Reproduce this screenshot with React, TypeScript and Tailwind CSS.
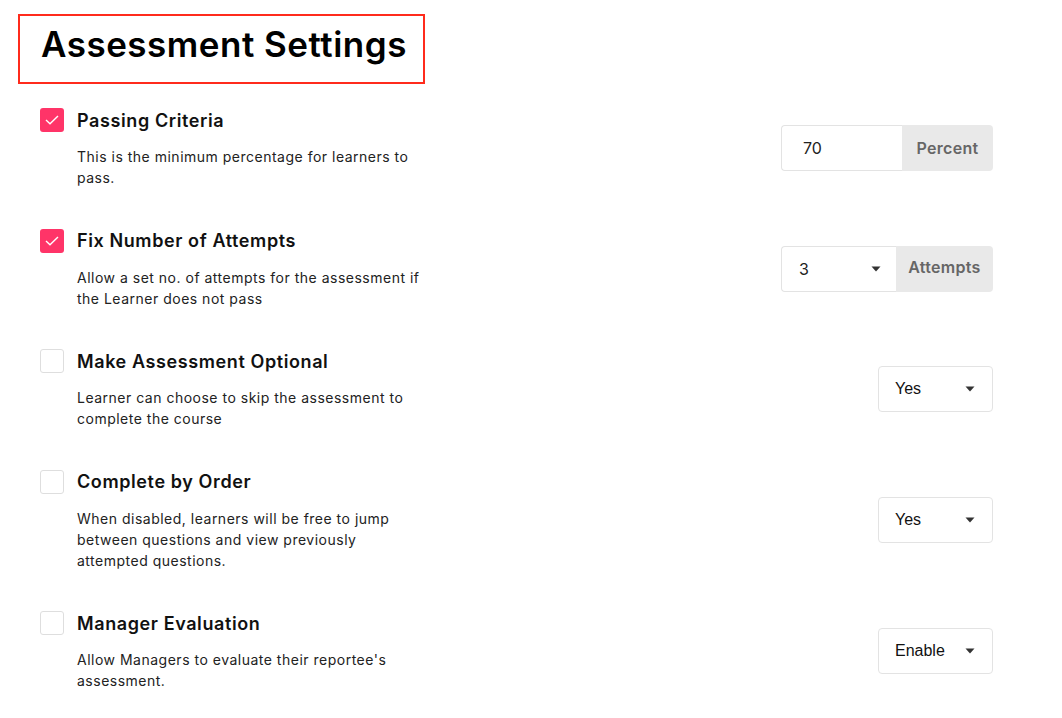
import React from "react";

type Control =
    | { kind: "addon"; value: string; addon: string; inputW: string; addonW: string; select?: boolean }
    | { kind: "select"; value: string };

type Setting = {
    title: string;
    lines: string[];
    checked: boolean;
    control: Control;
};

const settings: Setting[] = [
    {
        title: "Passing Criteria",
        lines: ["This is the minimum percentage for learners to", "pass."],
        checked: true,
        control: { kind: "addon", value: "70", addon: "Percent", inputW: "w-[121px]", addonW: "w-[91px]" },
    },
    {
        title: "Fix Number of Attempts",
        lines: ["Allow a set no. of attempts for the assessment if", "the Learner does not pass"],
        checked: true,
        control: { kind: "addon", value: "3", addon: "Attempts", inputW: "w-[115px]", addonW: "w-[97px]", select: true },
    },
    {
        title: "Make Assessment Optional",
        lines: ["Learner can choose to skip the assessment to", "complete the course"],
        checked: false,
        control: { kind: "select", value: "Yes" },
    },
    {
        title: "Complete by Order",
        lines: ["When disabled, learners will be free to jump", "between questions and view previously", "attempted questions."],
        checked: false,
        control: { kind: "select", value: "Yes" },
    },
    {
        title: "Manager Evaluation",
        lines: ["Allow Managers to evaluate their reportee's", "assessment."],
        checked: false,
        control: { kind: "select", value: "Enable" },
    },
];

function Caret() {
    return (
        <svg width="10" height="6" viewBox="0 0 10 6" className="shrink-0">
            <path d="M0.5 0.5 H9.5 L5 5.5 Z" fill="#333" />
        </svg>
    );
}

function Checkbox({ checked }: { checked: boolean }) {
    if (checked) {
        return (
            <div className="flex h-6 w-6 shrink-0 items-center justify-center rounded-[3px] bg-[#ff3468]">
                <svg width="14" height="10" viewBox="0 0 14 10">
                    <path d="M1 5 L5 8.8 L13 1" fill="none" stroke="white" strokeWidth="1.4" />
                </svg>
            </div>
        );
    }
    return <div className="h-6 w-6 shrink-0 rounded-[3px] border border-[#dedede] bg-white"></div>;
}

function SettingControl({ control }: { control: Control }) {
    if (control.kind === "addon") {
        return (
            <div className="flex h-[46px] w-[212px]">
                <div
                    className={`${control.inputW} flex items-center justify-between rounded-l-[4px] border border-r-0 border-[#e3e3e3] bg-white text-base text-[#222] ${
                        control.select ? "pl-[17px] pr-[15px]" : "pl-[21px]"
                    }`}
                >
                    <span>{control.value}</span>
                    {control.select && <Caret />}
                </div>
                <div
                    className={`${control.addonW} flex items-center justify-center rounded-r-[4px] bg-[#e9e9e9] text-base font-semibold tracking-[0.3px] text-[#666] ${
                        control.select ? "pb-1" : ""
                    }`}
                >
                    {control.addon}
                </div>
            </div>
        );
    }
    return (
        <div className="flex h-[46px] w-[115px] items-center justify-between rounded-[4px] border border-[#e3e3e3] bg-white pl-4 pr-[17px] font-['Liberation_Sans',Arial,sans-serif] text-base text-[#111]">
            <span>{control.value}</span>
            <Caret />
        </div>
    );
}

export default function App() {
    return (
        <div className="min-h-screen bg-white font-['Inter',sans-serif] text-[#111]">
            <div className="pl-[18px] pt-[14px]">
                <div className="flex h-[70px] w-[407px] items-center border-2 border-[#ff2b1c] pb-[9px] pl-[21px]">
                    <h1 className="text-[35px] font-semibold tracking-[0.5px] text-black">Assessment Settings</h1>
                </div>
            </div>

            <div className="ml-10 mt-[24px] flex w-[953px] flex-col gap-[40.6px]">
                {settings.map((s) => (
                    <div key={s.title} className="flex items-center justify-between">
                        <div className="flex flex-col">
                            <div className="flex h-6 items-center gap-[13px]">
                                <Checkbox checked={s.checked} />
                                <span className="pt-[1px] text-lg font-semibold tracking-[0.6px] text-[#111]">{s.title}</span>
                            </div>
                            <p className="mt-[14px] pl-[37px] text-sm leading-[21px] tracking-[0.5px] text-[#222]">
                                {s.lines.map((l, i) => (
                                    <React.Fragment key={i}>
                                        {l}
                                        {i < s.lines.length - 1 && <br />}
                                    </React.Fragment>
                                ))}
                            </p>
                        </div>
                        <SettingControl control={s.control} />
                    </div>
                ))}
            </div>
        </div>
    );
}
